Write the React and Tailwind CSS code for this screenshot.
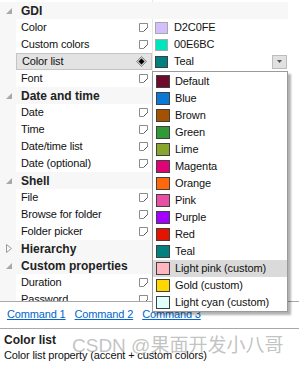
import React from "react";

const rows = [
  { type: "h", label: "GDI", open: true },
  { label: "Color", swatch: "#D2C0FE", value: "D2C0FE", light: true },
  { label: "Custom colors", swatch: "#00E6BC", value: "00E6BC", light: true },
  { label: "Color list", swatch: "#008080", value: "Teal", selected: true },
  { label: "Font" },
  { type: "h", label: "Date and time", open: true },
  { label: "Date" },
  { label: "Time" },
  { label: "Date/time list" },
  { label: "Date (optional)" },
  { type: "h", label: "Shell", open: true },
  { label: "File" },
  { label: "Browse for folder" },
  { label: "Folder picker" },
  { type: "h", label: "Hierarchy", open: false },
  { type: "h", label: "Custom properties", open: true },
  { label: "Duration" },
  { label: "Password" },
];

const colors = [
  ["Default", "#6e0b2d"],
  ["Blue", "#0a78d4"],
  ["Brown", "#a35200"],
  ["Green", "#2f9a36"],
  ["Lime", "#8aa52d"],
  ["Magenta", "#e00378"],
  ["Orange", "#ff690c"],
  ["Pink", "#e64fa4"],
  ["Purple", "#a200ff"],
  ["Red", "#e51400"],
  ["Teal", "#00807f"],
  ["Light pink (custom)", "#ffb6c1"],
  ["Gold (custom)", "#ffd700"],
  ["Light cyan (custom)", "#e0ffff"],
];

const EditIcon = () => (
  <svg width="9" height="9" viewBox="0 0 9 9">
    <path d="M0.5 8.5 V0.5 H8.5 V5" fill="none" stroke="#8c8c8c" />
    <path d="M0.5 8.5 H4.5" fill="none" stroke="#8c8c8c" />
    <path d="M4.5 8.5 L8.5 4.5" fill="none" stroke="#555" />
  </svg>
);

const DiamondIcon = () => (
  <svg width="11" height="11" viewBox="0 0 11 11">
    <path d="M5.5 0.5 L10.5 5.5 L5.5 10.5 L0.5 5.5 Z" fill="#c8c8c8" stroke="#8a8a8a" />
    <path d="M5.5 2.5 L8.5 5.5 L5.5 8.5 L2.5 5.5 Z" fill="#000" />
  </svg>
);

const Arrow = ({ open }) =>
  open ? (
    <svg width="6" height="6" viewBox="0 0 6 6">
      <path d="M6 0 V6 H0 Z" fill="#a8a8a8" />
    </svg>
  ) : (
    <svg width="6" height="9" viewBox="0 0 6 9">
      <path d="M0.5 0.5 L5.5 4.5 L0.5 8.5 Z" fill="none" stroke="#9a9a9a" />
    </svg>
  );

function Row({ row }) {
  if (row.type === "h") {
    return (
      <div className="flex h-[17px] w-[288px] items-center bg-[#f7f7f7]">
        <div className="flex w-[16px] justify-center pl-[1px]">
          <Arrow open={row.open} />
        </div>
        <span className="pl-[5px] text-[12px] font-bold text-[#222]">{row.label}</span>
      </div>
    );
  }
  return (
    <div className="flex h-[17px] w-[288px]">
      <div className="w-[16px] bg-[#f7f7f7]" />
      <div
        className={`flex w-[136px] items-center justify-between pl-[5px] pr-[4px] ${
          row.selected ? "border border-[#c4c4c4] bg-[#e3e3e3] pl-[4px] pr-[3px]" : "bg-white"
        }`}
      >
        <span className="text-[11px] tracking-[-0.15px] text-[#111]">{row.label}</span>
        {row.selected ? <DiamondIcon /> : <EditIcon />}
      </div>
      <div className="flex flex-1 items-center border-l border-[#e8e8e8] bg-white pl-[2px]">
        {row.swatch && (
          <>
            <span
              className={`h-[12px] w-[13px] border ${row.light ? "border-[#a8a8a8]" : "border-[#404040]"}`}
              style={{ background: row.swatch }}
            />
            <span className="pl-[6px] text-[11px] tracking-[-0.1px] text-[#111]">{row.value}</span>
          </>
        )}
        {row.selected && (
          <div className="ml-auto mr-[1px] flex h-[14px] w-[15px] items-center justify-center border border-[#bdbdbd] bg-[#e1e1e1]">
            <svg width="5" height="3" viewBox="0 0 5 3">
              <path d="M0 0 H5 L2.5 3 Z" fill="#555" />
            </svg>
          </div>
        )}
      </div>
    </div>
  );
}

export default function App() {
  return (
    <div className="relative h-[368px] w-[299px] overflow-hidden bg-white font-['Liberation_Sans',Arial,sans-serif]">
      <div className="h-[301px] overflow-hidden">
        <div className="flex h-[2px] w-[288px]">
          <div className="w-[152px] bg-white" />
          <div className="flex-1 border-l border-[#e8e8e8] bg-white" />
        </div>
        {rows.map((r, i) => (
          <Row key={i} row={r} />
        ))}
      </div>

      <div className="h-[27px] border-t border-[#a8a8a8] pl-[7px] pt-[4px]">
        <div className="flex gap-[9px] text-[11px] tracking-[-0.15px] text-[#0066cc] underline">
          <span>Command 1</span>
          <span>Command 2</span>
          <span>Command 3</span>
        </div>
      </div>

      <div className="border-t border-[#a8a8a8] pl-[4px] pt-[3px]">
        <div className="text-[12px] font-bold leading-[16px] text-[#222]">Color list</div>
        <div className="text-[11px] leading-[14px] tracking-[-0.15px] text-[#111]">
          Color list property (accent + custom colors)
        </div>
      </div>

      <div className="absolute left-[152px] top-[71px] w-[136px] border border-[#9a9a9a] bg-white pt-[1px] shadow-[3px_3px_2px_rgba(0,0,0,0.3)]">
        {colors.map(([name, c]) => (
          <div
            key={name}
            className={`flex h-[17px] items-center pl-[3px] ${name === "Light pink (custom)" ? "bg-[#dadada]" : ""}`}
          >
            <span className="h-[13px] w-[14px] border border-[#404040]" style={{ background: c }} />
            <span className="pl-[5px] text-[11px] tracking-[-0.1px] text-[#111]">{name}</span>
          </div>
        ))}
      </div>

      <div className="pointer-events-none absolute left-[72px] top-[334px] whitespace-nowrap text-[19px] leading-[24px] text-[#9a9a9a]/60 font-['Liberation_Sans','Noto_Sans_CJK_SC',sans-serif]">
        CSDN @果面开发小八哥
      </div>
    </div>
  );
}
